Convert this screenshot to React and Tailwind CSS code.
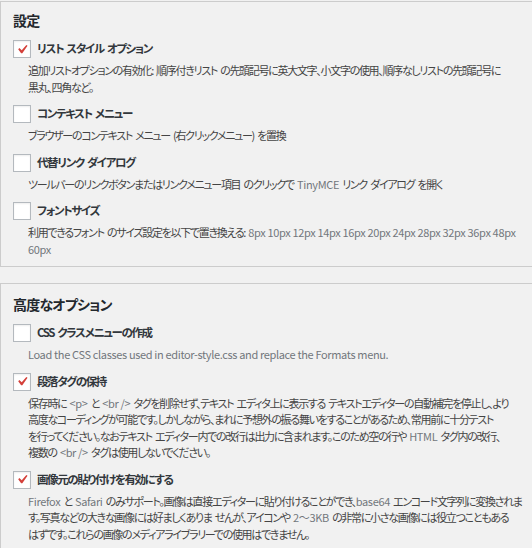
import React from "react";

const G = ({ children }) => (
  <span className="text-[#72777c] tracking-[-0.35px] [word-spacing:0px]">{children}</span>
);

const Check = () => (
  <svg viewBox="0 0 20 20" className="h-[21px] w-[21px] -m-px" aria-hidden="true">
    <path d="M14.83 4.89l1.34.94-5.81 8.38H9.02L5.78 9.67l1.34-1.25 2.57 2.4z" fill="#d4403a" />
  </svg>
);

const Option = ({ checked, label, children }) => (
  <div className="flex flex-col">
    <label className="flex items-center gap-[6px] h-[18px]">
      <span className="flex h-[18px] w-[18px] shrink-0 items-center justify-center border border-[#b4b9be] bg-white shadow-[inset_0_1px_2px_rgba(0,0,0,0.07)]">
        {checked && <Check />}
      </span>
      <span className="text-[11.5px] font-bold text-[#32373c] tracking-[-1.4px] [word-spacing:2px]">{label}</span>
    </label>
    <p className="mt-[4px] pl-[15px] text-[11px] leading-[16.5px] text-[#444] whitespace-nowrap tracking-[-1.3px] [word-spacing:2px]">
      {children}
    </p>
  </div>
);

const Panel = ({ title, className, children }) => (
  <section className={"border border-r-0 border-[#ccc] bg-[#f1f1f1] pl-[12px] pt-[8px] pb-[9px] " + className}>
    <h2 className="text-[14px] leading-[20px] font-semibold text-[#23282d] tracking-[-0.8px]">{title}</h2>
    <div className="mt-[10px] flex flex-col gap-[10px]">{children}</div>
  </section>
);

export default function App() {
  return (
    <div
      className="min-h-[548px] bg-[#f1f1f1] pt-px overflow-hidden [font-feature-settings:'palt'] font-['Noto_Sans_CJK_JP','Noto_Sans',sans-serif]"
    >
      <Panel title="設定">
        <Option checked label="リスト スタイル オプション">
          追加リストオプションの有効化: 順序付きリスト の先頭記号に英大文字、小文字の使用、順序なしリストの先頭記号に
          <br />
          黒丸、四角など。
        </Option>
        <Option label="コンテキスト メニュー">
          ブラウザーのコンテキスト メニュー (右クリックメニュー) を置換
        </Option>
        <Option label="代替リンク ダイアログ">
          ツールバーのリンクボタンまたはリンクメニュー項目 のクリックで <G>TinyMCE</G> リンク ダイアログ を開く
        </Option>
        <Option label="フォントサイズ">
          利用できるフォント のサイズ設定を以下で置き換える:{" "}
          <G>8px 10px 12px 14px 16px 20px 24px 28px 32px 36px 48px</G>
          <br />
          <G>60px</G>
        </Option>
      </Panel>

      <Panel title="高度なオプション" className="mt-[16px] pt-[10px]">
        <Option label="CSS クラスメニューの作成">
          <G>Load the CSS classes used in editor-style.css and replace the Formats menu.</G>
        </Option>
        <Option checked label="段落タグの保持">
          保存時に <G>&lt;p&gt;</G> と <G>&lt;br /&gt;</G> タグを削除せず、テキスト エディタ上に表示する テキストエディターの自動補完を停止し、より
          <br />
          高度なコーディングが可能です。しかしながら、まれに予想外の振る舞いをすることがあるため、常用前に十分テスト
          <br />
          を行ってください。なおテキスト エディター内での改行は出力に含まれます。このため空の行や <G>HTML</G> タグ内の改行、
          <br />
          複数の <G>&lt;br /&gt;</G> タグは使用しないでください。
        </Option>
        <Option checked label="画像元の貼り付けを有効にする">
          <G>Firefox</G> と <G>Safari</G> のみサポート。画像は直接エディターに貼り付けることができ、<G>base64</G> エンコード文字列に変換されま
          <br />
          す。写真などの大きな画像には好ましくありま せんが、アイコンや <G>2～3KB</G> の非常に小さな画像には役立つこともある
          <br />
          はずです。これらの画像のメディアライブラリーでの使用はできません。
        </Option>
      </Panel>
    </div>
  );
}
